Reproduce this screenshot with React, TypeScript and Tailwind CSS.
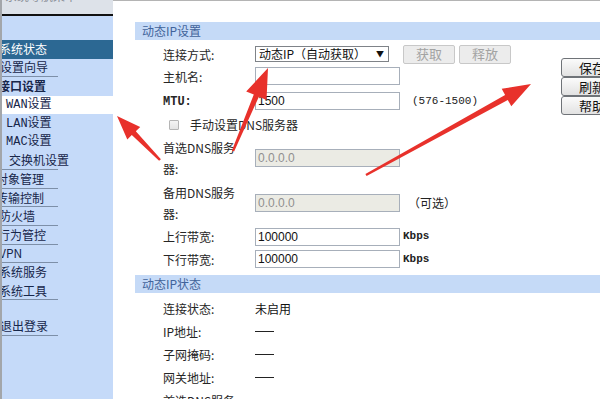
import React from "react";

const CJK = '"Noto Sans CJK SC", "Noto Sans", sans-serif';

type Item = { t: string; x: number; line?: boolean; active?: boolean; white?: boolean; bold?: boolean; sub?: boolean };

const items: Item[] = [
  { t: "系统状态", x: -3, active: true },
  { t: "设置向导", x: -2, line: true },
  { t: "接口设置", x: -4, bold: true },
  { t: "WAN设置", x: 4, white: true, sub: true },
  { t: "LAN设置", x: 4, sub: true },
  { t: "MAC设置", x: 4, sub: true },
  { t: "交换机设置", x: 7, line: true },
  { t: "对象管理", x: -6, line: true },
  { t: "传输控制", x: -6, line: true },
  { t: "防火墙", x: -3, line: true },
  { t: "行为管控", x: -4, line: true },
  { t: "VPN", x: -3, line: true },
  { t: "系统服务", x: -3 },
  { t: "系统工具", x: -3, line: true },
];

function MenuItem({ it }: { it: Item }) {
  const bg = it.active ? "bg-[#2c6893]" : it.white ? "bg-white" : "";
  const color = it.active ? "text-white" : "text-[#17264a]";
  return (
    <div className={`h-[18.6px] w-full flex ${bg}`}>
      <div className={`w-[56px] h-full flex items-center ${it.line ? "border-b border-[#7d8fa8]" : ""}`}>
        <span
          className={`whitespace-nowrap text-[12px] leading-none ${color} ${it.bold ? "font-bold" : ""}`}
          style={{ marginLeft: it.x, fontFamily: it.sub ? '"Liberation Mono", "Noto Sans CJK SC", monospace' : CJK }}
        >
          {it.t}
        </span>
      </div>
    </div>
  );
}

function Sidebar() {
  return (
    <div className="w-[113px] h-full flex shrink-0 bg-[#c5daf9]">
      <div className="w-[2px] h-full bg-[#a3a6aa]" />
      <div className="flex-1 h-full flex flex-col overflow-hidden">
        <div className="h-[14px] bg-[#dde2e9] overflow-hidden">
          <div className="text-[12px] leading-[14px] text-[#8a8f98] mt-[-11px] ml-[3px] whitespace-nowrap" style={{ fontFamily: CJK }}>
            系统导航菜单
          </div>
        </div>
        <div className="h-[2px] bg-[#111]" />
        <div className="h-[24px]" />
        {items.map((it) => (
          <MenuItem key={it.t} it={it} />
        ))}
        <div className="h-[17px]" />
        <MenuItem it={{ t: "退出登录", x: -2, line: true }} />
      </div>
    </div>
  );
}

function Label({ children, bold }: { children: React.ReactNode; bold?: boolean }) {
  return (
    <div
      className={`w-[120px] shrink-0 pl-[28px] text-[12px] leading-[21px] text-[#262626] whitespace-nowrap ${bold ? "font-bold" : ""}`}
      style={{ fontFamily: CJK }}
    >
      {children}
    </div>
  );
}

function TextBox({ value, disabled }: { value?: string; disabled?: boolean }) {
  return (
    <div
      className={`w-[145px] h-[18px] shrink-0 border border-[#a7afba] flex items-center pl-[2px] text-[12px] ${
        disabled ? "bg-[#ebebe4] text-[#8f8f8f]" : "bg-white text-[#111]"
      }`}
      style={{ fontFamily: '"Liberation Sans", sans-serif' }}
    >
      {value}
    </div>
  );
}

function GrayBtn({ t }: { t: string }) {
  return (
    <div
      className="h-[19px] w-[52px] rounded-[2px] border border-[#c8c8c8] bg-[#ececec] text-[#a3a3a3] text-[13px] flex items-center justify-center"
      style={{ fontFamily: CJK }}
    >
      {t}
    </div>
  );
}

function SideBtn({ t }: { t: string }) {
  return (
    <div
      className="h-[19px] w-[50px] rounded-[3px] border border-[#6f7378] bg-gradient-to-b from-[#fbfbfb] to-[#e2e2e2] text-[13px] text-[#111] flex items-center pl-[17px] shrink-0"
      style={{ fontFamily: CJK }}
    >
      {t}
    </div>
  );
}

function Header({ t }: { t: string }) {
  return (
    <div className="h-[18px] shrink-0 bg-[#c5daf7] flex items-center pl-[7px] text-[12px] text-[#41639a]" style={{ fontFamily: CJK }}>
      {t}
    </div>
  );
}

function Dash() {
  return <div className="w-[19px] h-[1px] bg-[#222]" />;
}

function arrowPoints(tx: number, ty: number, px: number, py: number, L = 27, W = 10, w0 = 1.2, w1 = 2.8) {
  const dx = px - tx;
  const dy = py - ty;
  const len = Math.hypot(dx, dy);
  const ux = dx / len;
  const uy = dy / len;
  const nx = -uy;
  const ny = ux;
  const bx = px - ux * L;
  const by = py - uy * L;
  const pts = [
    [tx + nx * w0, ty + ny * w0],
    [bx + nx * w1, by + ny * w1],
    [bx + nx * W, by + ny * W],
    [px, py],
    [bx - nx * W, by - ny * W],
    [bx - nx * w1, by - ny * w1],
    [tx - nx * w0, ty - ny * w0],
  ];
  return pts.map((p) => `${p[0].toFixed(1)},${p[1].toFixed(1)}`).join(" ");
}

function Arrows() {
  return (
    <svg className="absolute left-0 top-0 pointer-events-none" width={600} height={399} viewBox="0 0 600 399">
      <polygon points={arrowPoints(160, 160, 117, 116, 24, 9)} fill="#e8312b" />
      <polygon points={arrowPoints(233, 151, 268, 68, 30, 11)} fill="#e8312b" />
      <polygon points={arrowPoints(366, 175, 531, 84, 28, 10)} fill="#e8312b" />
    </svg>
  );
}

export default function App() {
  const mono = { fontFamily: '"Liberation Mono", monospace' };
  return (
    <div className="relative w-[600px] h-[399px] overflow-hidden bg-white flex">
      <Sidebar />
      <div className="flex-1 h-full border-t border-[#b4b4b4] pl-[22px] pt-[21px] flex flex-col overflow-hidden">
        <Header t="动态IP设置" />
        <div className="flex shrink-0">
          <div className="flex-1 flex flex-col">
            <div className="h-[4px]" />
            <div className="h-[20px] flex items-center">
              <Label>连接方式:</Label>
              <div
                className="w-[134px] h-[16px] shrink-0 border border-[#7f8388] bg-white flex items-center justify-between pl-[3px] pr-[4px] text-[12px] text-[#111]"
                style={{ fontFamily: CJK }}
              >
                <span>动态IP（自动获取）</span>
                <span className="text-[8px]">▼</span>
              </div>
              <div className="ml-[14px] flex gap-[4px]">
                <GrayBtn t="获取" />
                <GrayBtn t="释放" />
              </div>
            </div>
            <div className="h-[24px] flex items-center">
              <Label>主机名:</Label>
              <TextBox />
            </div>
            <div className="h-[26px] flex items-center">
              <Label bold>
                <span style={mono} className="text-[12px]">MTU:</span>
              </Label>
              <TextBox value="1500" />
              <span className="ml-[12px] text-[11px] text-[#222]" style={mono}>(576-1500)</span>
            </div>
            <div className="h-[21px] flex items-center pl-[34px]">
              <div className="w-[10px] h-[10px] border border-[#b5b5b5] rounded-[1px] bg-gradient-to-b from-[#f4f4f4] to-[#e4e4e4]" />
              <span className="ml-[11px] text-[12px] text-[#262626]" style={{ fontFamily: CJK }}>手动设置DNS服务器</span>
            </div>
            <div className="h-[46px] flex items-center">
              <Label>
                首选DNS服务
                <br />
                器:
              </Label>
              <TextBox value="0.0.0.0" disabled />
            </div>
            <div className="h-[44px] flex items-center">
              <Label>
                备用DNS服务
                <br />
                器:
              </Label>
              <TextBox value="0.0.0.0" disabled />
              <span className="ml-[8px] text-[12px] text-[#222]" style={{ fontFamily: CJK }}>（可选）</span>
            </div>
            <div className="h-[23px] flex items-center">
              <Label>上行带宽:</Label>
              <TextBox value="100000" />
              <span className="ml-[3px] text-[11px] font-bold text-[#222]" style={mono}>Kbps</span>
            </div>
            <div className="h-[22px] flex items-center">
              <Label>下行带宽:</Label>
              <TextBox value="100000" />
              <span className="ml-[3px] text-[11px] font-bold text-[#222]" style={mono}>Kbps</span>
            </div>
            <div className="h-[5px]" />
          </div>
          <div className="w-[39px] shrink-0 pt-[18px] flex flex-col">
            <SideBtn t="保存" />
            <SideBtn t="刷新" />
            <SideBtn t="帮助" />
          </div>
        </div>
        <Header t="动态IP状态" />
        <div className="h-[4px] shrink-0" />
        <div className="h-[23px] shrink-0 flex items-center">
          <Label>连接状态:</Label>
          <span className="text-[12px] text-[#111]" style={{ fontFamily: CJK }}>未启用</span>
        </div>
        <div className="h-[23px] shrink-0 flex items-center">
          <Label>IP地址:</Label>
          <Dash />
        </div>
        <div className="h-[23px] shrink-0 flex items-center">
          <Label>子网掩码:</Label>
          <Dash />
        </div>
        <div className="h-[23px] shrink-0 flex items-center">
          <Label>网关地址:</Label>
          <Dash />
        </div>
        <div className="h-[23px] shrink-0 flex items-center">
          <Label>首选DNS服务</Label>
        </div>
      </div>
      <Arrows />
    </div>
  );
}
